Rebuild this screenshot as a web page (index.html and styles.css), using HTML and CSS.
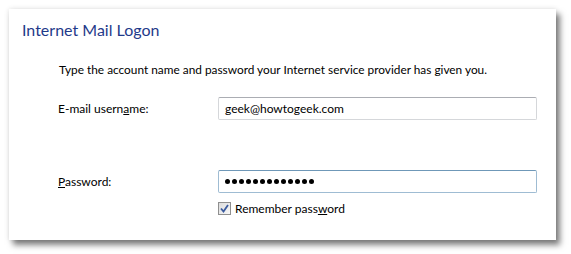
FILE: index.html
```html
<!DOCTYPE html>
<html>
<head>
<meta charset="utf-8">
<link rel="stylesheet" href="styles.css">
</head>
<body>
<div class="panel">
  <h1 class="title">Internet Mail Logon</h1>
  <p class="intro">Type the account name and password your Internet service provider has given you.</p>
  <div class="form">
    <label class="label">E-mail usern<u>a</u>me:</label>
    <div class="input">geek@howtogeek.com</div>
    <label class="label label-pass"><u>P</u>assword:</label>
    <div class="input input-focus label-pass">
      <span class="dots"><i></i><i></i><i></i><i></i><i></i><i></i><i></i><i></i><i></i><i></i><i></i><i></i><i></i></span>
    </div>
    <span></span>
    <div class="check">
      <span class="box"><svg width="9" height="9" viewBox="0 0 9 9"><path d="M1 4.5 L3.5 7.5 L8 1" fill="none" stroke="#3a5a9e" stroke-width="1.8"/></svg></span>
      <span>Remember pass<u>w</u>ord</span>
    </div>
  </div>
</div>
</body>
</html>
```

FILE: styles.css
```css
html, body {
  margin: 0;
  padding: 0;
  background: #ffffff;
}
body {
  box-sizing: border-box;
  min-height: 254px;
  padding: 9px 15px 14px 9px;
  font-family: "Lato", "Open Sans", sans-serif;
  color: #000;
}
.panel {
  box-sizing: border-box;
  width: 547px;
  height: 231px;
  background: #fff;
  box-shadow: 4px 5px 6px rgba(0,0,0,0.5), 0 0 5px rgba(0,0,0,0.12);
  padding: 10px 0 0 13px;
}
.title {
  margin: 0;
  font-weight: normal;
  font-size: 16px;
  line-height: 22px;
  color: #1f3a8a;
}
.intro {
  margin: 21px 0 0 37px;
  font-size: 11.85px;
  line-height: 16px;
}
.form {
  display: grid;
  grid-template-columns: 160px 319px;
  margin: 19px 0 0 36px;
  align-items: center;
  font-size: 12px;
}
.label-pass {
  margin-top: 50px;
}
.input {
  box-sizing: border-box;
  height: 23px;
  border: 1px solid #d5d7da;
  border-top-color: #abadb3;
  border-radius: 2px;
  padding: 0 6px;
  display: flex;
  align-items: center;
}
.input-focus {
  border-color: #9fbcd3;
  border-top-color: #6f98b8;
}
.dots {
  display: flex;
  gap: 2px;
}
.dots i {
  width: 5px;
  height: 5px;
  border-radius: 50%;
  background: #000;
}
.check {
  display: flex;
  align-items: center;
  gap: 4px;
  margin-top: 8px;
}
.box {
  box-sizing: border-box;
  width: 13px;
  height: 13px;
  border: 1px solid #8f8f8f;
  background: linear-gradient(135deg, #dcdcdc, #f8f8f8);
  display: flex;
  align-items: center;
  justify-content: center;
}
```
